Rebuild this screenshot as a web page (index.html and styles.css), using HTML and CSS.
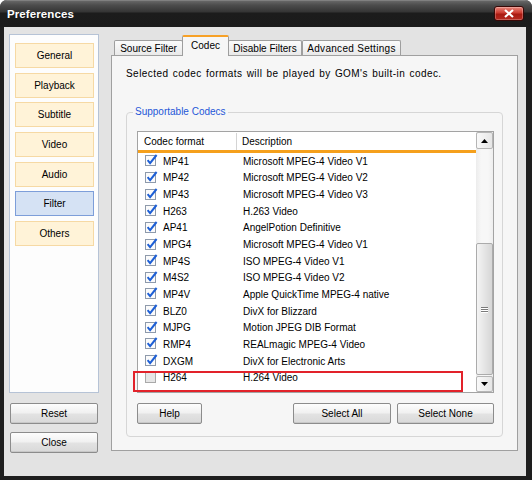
FILE: index.html
```html
<!DOCTYPE html>
<html>
<head>
<meta charset="utf-8">
<title>Preferences</title>
<link rel="stylesheet" href="styles.css">
</head>
<body>
<div class="window">
  <div class="titlebar">
    <span class="title">Preferences</span>
    <span class="close-x"><svg viewBox="0 0 12 9" width="12" height="9"><path d="M2 1 L10 8 M10 1 L2 8" stroke="#fff" stroke-width="2.2" fill="none"/></svg></span>
  </div>
  <div class="content">
    <div class="sidebar">
      <div class="navbox">
        <div class="nav">General</div>
        <div class="nav">Playback</div>
        <div class="nav">Subtitle</div>
        <div class="nav">Video</div>
        <div class="nav">Audio</div>
        <div class="nav active">Filter</div>
        <div class="nav">Others</div>
      </div>
      <div class="btn side-btn">Reset</div>
      <div class="btn side-btn">Close</div>
    </div>
    <div class="tabs">
      <div class="tabstrip">
        <div class="tab t1">Source Filter</div>
        <div class="tab t2 selected">Codec</div>
        <div class="tab t3">Disable Filters</div>
        <div class="tab t4">Advanced Settings</div>
      </div>
      <div class="tabpage">
        <p class="intro">Selected codec formats will be played by GOM's built-in codec.</p>
        <fieldset class="group">
          <legend>Supportable Codecs</legend>
          <div class="list">
            <div class="lv">
              <div class="lv-head"><span class="c1">Codec format</span><span class="c2">Description</span></div>
              <div class="lv-rows">
                <div class="row"><span class="c1"><svg class="cb" viewBox="0 0 13 13"><rect x="0.5" y="1.5" width="10" height="10" fill="#fbfbfb" stroke="#8e9aab"/><path d="M2.6 6.2 L5.1 9.1 L11.6 1" fill="none" stroke="#1d5fd6" stroke-width="2"/></svg>MP41</span><span class="c2">Microsoft MPEG-4 Video V1</span></div>
                <div class="row"><span class="c1"><svg class="cb" viewBox="0 0 13 13"><rect x="0.5" y="1.5" width="10" height="10" fill="#fbfbfb" stroke="#8e9aab"/><path d="M2.6 6.2 L5.1 9.1 L11.6 1" fill="none" stroke="#1d5fd6" stroke-width="2"/></svg>MP42</span><span class="c2">Microsoft MPEG-4 Video V2</span></div>
                <div class="row"><span class="c1"><svg class="cb" viewBox="0 0 13 13"><rect x="0.5" y="1.5" width="10" height="10" fill="#fbfbfb" stroke="#8e9aab"/><path d="M2.6 6.2 L5.1 9.1 L11.6 1" fill="none" stroke="#1d5fd6" stroke-width="2"/></svg>MP43</span><span class="c2">Microsoft MPEG-4 Video V3</span></div>
                <div class="row"><span class="c1"><svg class="cb" viewBox="0 0 13 13"><rect x="0.5" y="1.5" width="10" height="10" fill="#fbfbfb" stroke="#8e9aab"/><path d="M2.6 6.2 L5.1 9.1 L11.6 1" fill="none" stroke="#1d5fd6" stroke-width="2"/></svg>H263</span><span class="c2">H.263 Video</span></div>
                <div class="row"><span class="c1"><svg class="cb" viewBox="0 0 13 13"><rect x="0.5" y="1.5" width="10" height="10" fill="#fbfbfb" stroke="#8e9aab"/><path d="M2.6 6.2 L5.1 9.1 L11.6 1" fill="none" stroke="#1d5fd6" stroke-width="2"/></svg>AP41</span><span class="c2">AngelPotion Definitive</span></div>
                <div class="row"><span class="c1"><svg class="cb" viewBox="0 0 13 13"><rect x="0.5" y="1.5" width="10" height="10" fill="#fbfbfb" stroke="#8e9aab"/><path d="M2.6 6.2 L5.1 9.1 L11.6 1" fill="none" stroke="#1d5fd6" stroke-width="2"/></svg>MPG4</span><span class="c2">Microsoft MPEG-4 Video V1</span></div>
                <div class="row"><span class="c1"><svg class="cb" viewBox="0 0 13 13"><rect x="0.5" y="1.5" width="10" height="10" fill="#fbfbfb" stroke="#8e9aab"/><path d="M2.6 6.2 L5.1 9.1 L11.6 1" fill="none" stroke="#1d5fd6" stroke-width="2"/></svg>MP4S</span><span class="c2">ISO MPEG-4 Video V1</span></div>
                <div class="row"><span class="c1"><svg class="cb" viewBox="0 0 13 13"><rect x="0.5" y="1.5" width="10" height="10" fill="#fbfbfb" stroke="#8e9aab"/><path d="M2.6 6.2 L5.1 9.1 L11.6 1" fill="none" stroke="#1d5fd6" stroke-width="2"/></svg>M4S2</span><span class="c2">ISO MPEG-4 Video V2</span></div>
                <div class="row"><span class="c1"><svg class="cb" viewBox="0 0 13 13"><rect x="0.5" y="1.5" width="10" height="10" fill="#fbfbfb" stroke="#8e9aab"/><path d="M2.6 6.2 L5.1 9.1 L11.6 1" fill="none" stroke="#1d5fd6" stroke-width="2"/></svg>MP4V</span><span class="c2">Apple QuickTime MPEG-4 native</span></div>
                <div class="row"><span class="c1"><svg class="cb" viewBox="0 0 13 13"><rect x="0.5" y="1.5" width="10" height="10" fill="#fbfbfb" stroke="#8e9aab"/><path d="M2.6 6.2 L5.1 9.1 L11.6 1" fill="none" stroke="#1d5fd6" stroke-width="2"/></svg>BLZ0</span><span class="c2">DivX for Blizzard</span></div>
                <div class="row"><span class="c1"><svg class="cb" viewBox="0 0 13 13"><rect x="0.5" y="1.5" width="10" height="10" fill="#fbfbfb" stroke="#8e9aab"/><path d="M2.6 6.2 L5.1 9.1 L11.6 1" fill="none" stroke="#1d5fd6" stroke-width="2"/></svg>MJPG</span><span class="c2">Motion JPEG DIB Format</span></div>
                <div class="row"><span class="c1"><svg class="cb" viewBox="0 0 13 13"><rect x="0.5" y="1.5" width="10" height="10" fill="#fbfbfb" stroke="#8e9aab"/><path d="M2.6 6.2 L5.1 9.1 L11.6 1" fill="none" stroke="#1d5fd6" stroke-width="2"/></svg>RMP4</span><span class="c2">REALmagic MPEG-4 Video</span></div>
                <div class="row"><span class="c1"><svg class="cb" viewBox="0 0 13 13"><rect x="0.5" y="1.5" width="10" height="10" fill="#fbfbfb" stroke="#8e9aab"/><path d="M2.6 6.2 L5.1 9.1 L11.6 1" fill="none" stroke="#1d5fd6" stroke-width="2"/></svg>DXGM</span><span class="c2">DivX for Electronic Arts</span></div>
                <div class="row"><span class="c1"><svg class="cb" viewBox="0 0 13 13"><rect x="0.5" y="1.5" width="10" height="10" fill="#e6e6e6" stroke="#a9a9a9"/></svg>H264</span><span class="c2">H.264 Video</span></div>
              </div>
            </div>
            <div class="vscroll">
              <div class="sb-btn"><svg viewBox="0 0 7 4" width="7" height="4"><path d="M0 4 L3.5 0 L7 4 Z" fill="#000"/></svg></div>
              <div class="sb-track">
                <div class="sb-thumb"><span class="grip"></span><span class="grip"></span><span class="grip"></span></div>
              </div>
              <div class="sb-btn down"><svg viewBox="0 0 7 4" width="7" height="4"><path d="M0 0 L7 0 L3.5 4 Z" fill="#000"/></svg></div>
            </div>
            <div class="highlight"></div>
          </div>
          <div class="btnrow">
            <div class="btn help">Help</div>
            <div class="spacer"></div>
            <div class="btn sel-all">Select All</div>
            <div class="btn sel-none">Select None</div>
          </div>
        </fieldset>
      </div>
    </div>
  </div>
</div>
</body>
</html>
```
FILE: styles.css
```css
* { box-sizing: border-box; }
html, body { margin: 0; padding: 0; background: #ffffff; }
body {
  font-family: "Liberation Sans", Arial, sans-serif;
  font-size: 10px;
  color: #000;
}

.window {
  width: 532px;
  height: 480px;
  display: flex;
  flex-direction: column;
  background: #1e1e1e;
  border-radius: 7px 7px 0 0;
  overflow: hidden;
}

.titlebar {
  height: 27px;
  flex: none;
  display: flex;
  align-items: center;
  justify-content: space-between;
  padding: 0 8px 0 7px;
  background: linear-gradient(#9a9a9a 0, #666 1px, #4d4d4d 5px, #343434 12px, #1c1c1c 13px, #1b1b1b 100%);
}
.title {
  color: #fff;
  font-weight: bold;
  font-size: 11.5px;
  letter-spacing: 0.1px;
}
.close-x {
  width: 30px;
  height: 15px;
  border: 1px solid #3a0806;
  border-radius: 3px;
  background: linear-gradient(#e8877c 0, #cc3b30 45%, #a81a12 55%, #b52a20 100%);
  box-shadow: inset 0 0 0 1px rgba(255,255,255,0.25);
  display: flex;
  align-items: center;
  justify-content: center;
}

.content {
  flex: 1;
  display: flex;
  gap: 12px;
  margin: 0 6px 4px 4px;
  padding: 7px 8px 0 5px;
  background: #e3e3e3;
}

.sidebar {
  width: 90px;
  display: flex;
  flex-direction: column;
}
.navbox {
  height: 359px;
  background: #fdfdfd;
  border: 1px solid #b6c3d6;
  padding: 8px 4px 0 5px;
  display: flex;
  flex-direction: column;
  gap: 4.65px;
}
.nav {
  height: 25px;
  background: #fff3d8;
  border: 1px solid #f6d9a4;
  display: flex;
  align-items: center;
  justify-content: center;
}
.nav.active {
  background: #d5e2f4;
  border-color: #7d9ed9;
}

.btn {
  height: 21px;
  border: 1px solid #8c8c8c;
  border-radius: 2px;
  background: linear-gradient(#fdfdfd 0, #f1f1f1 45%, #e2e2e2 55%, #d9d9d9 100%);
  box-shadow: inset 0 -1px 0 #c8c8c8;
  display: flex;
  align-items: center;
  justify-content: center;
}
.side-btn { margin: 10px 1px 0 1px; }
.side-btn + .side-btn { margin-top: 8px; }

.tabs {
  width: 407px;
  display: flex;
  flex-direction: column;
}
.tabstrip {
  height: 21px;
  display: flex;
  align-items: flex-end;
  padding-left: 3px;
}
.tab {
  height: 15px;
  border: 1px solid #9e9e9e;
  border-bottom: none;
  background: linear-gradient(#fbfbfb, #e9e9e9);
  display: flex;
  align-items: center;
  justify-content: center;
  border-radius: 2px 2px 0 0;
}
.tab + .tab { margin-left: -1px; }
.t1 { width: 69px; }
.t2 { width: 47px; }
.t3 { width: 74px; }
.t4 { width: 99px; margin-left: 0 !important; letter-spacing: 0.3px; }
.tab.selected {
  height: 21px;
  margin-bottom: -1px;
  position: relative;
  z-index: 1;
  background: #f6f6f6;
  border-top: 2px solid #f7a127;
  align-items: flex-start;
  padding-top: 3px;
}

.tabpage {
  border: 1px solid #a0a0a0;
  background: #f6f6f6;
  padding: 12px 14px 13px 14px;
}
.intro {
  margin: 0 0 26px 0;
  line-height: 12px;
  letter-spacing: 0.45px;
  word-spacing: 1px;
}

.group {
  margin: 0;
  min-width: 0;
  border: 1px solid #d6d6d6;
  border-radius: 4px;
  padding: 13px 8px 12px 10px;
}
.group legend {
  color: #1f57d8;
  line-height: 12px;
  padding: 0 2px;
  margin-left: -4px;
}

.list {
  position: relative;
  height: 262px;
  border: 1px solid #a3a3a3;
  background: #fff;
  display: flex;
}
.lv {
  flex: 1;
  display: flex;
  flex-direction: column;
}
.lv-head {
  height: 21px;
  flex: none;
  border-bottom: 3px solid #f5a01c;
  display: flex;
  align-items: center;
  background: #fff;
}
.lv-head .c1 {
  width: 99px;
  padding-left: 6px;
  align-self: stretch;
  display: flex;
  align-items: center;
  border-right: 1px solid #d4d4d4;
  margin-top: 1px;
}
.lv-head .c2 { padding-left: 5px; }

.row {
  height: 16.65px;
  display: flex;
  align-items: center;
}
.row .c1 {
  width: 100px;
  padding-left: 7px;
  display: flex;
  align-items: center;
}
.row .c2 { padding-left: 5px; }
.cb {
  width: 13px;
  height: 13px;
  margin-right: 5px;
  margin-top: -1px;
}

.vscroll {
  width: 17px;
  display: flex;
  flex-direction: column;
  background: linear-gradient(90deg, #ececec, #f7f7f7 30%, #f7f7f7 70%, #eeeeee);
}
.sb-btn {
  height: 17px;
  border: 1px solid #b5b5b5;
  border-radius: 2px;
  background: linear-gradient(90deg, #f9f9f9, #e6e6e6);
  display: flex;
  align-items: center;
  justify-content: center;
}
.sb-btn.down { height: 16px; }
.sb-track {
  flex: 1;
  display: flex;
  flex-direction: column;
  justify-content: flex-end;
  padding-bottom: 1px;
}
.sb-thumb {
  height: 132px;
  border: 1px solid #ababab;
  border-radius: 2px;
  background: linear-gradient(90deg, #f4f4f4, #e2e2e2 60%, #d6d6d6);
  display: flex;
  flex-direction: column;
  align-items: center;
  justify-content: center;
  gap: 1px;
}
.grip {
  width: 7px;
  height: 1px;
  background: #7a7a7a;
  box-shadow: 0 1px 0 #fff;
}

.highlight {
  position: absolute;
  left: -5px;
  top: 239px;
  width: 330px;
  height: 21px;
  border: 2px solid #e2222a;
}

.btnrow {
  display: flex;
  margin-top: 10px;
}
.help { width: 65px; }
.spacer { flex: 1; }
.sel-all { width: 98px; margin-right: 6px; }
.sel-none { width: 97px; }
```
